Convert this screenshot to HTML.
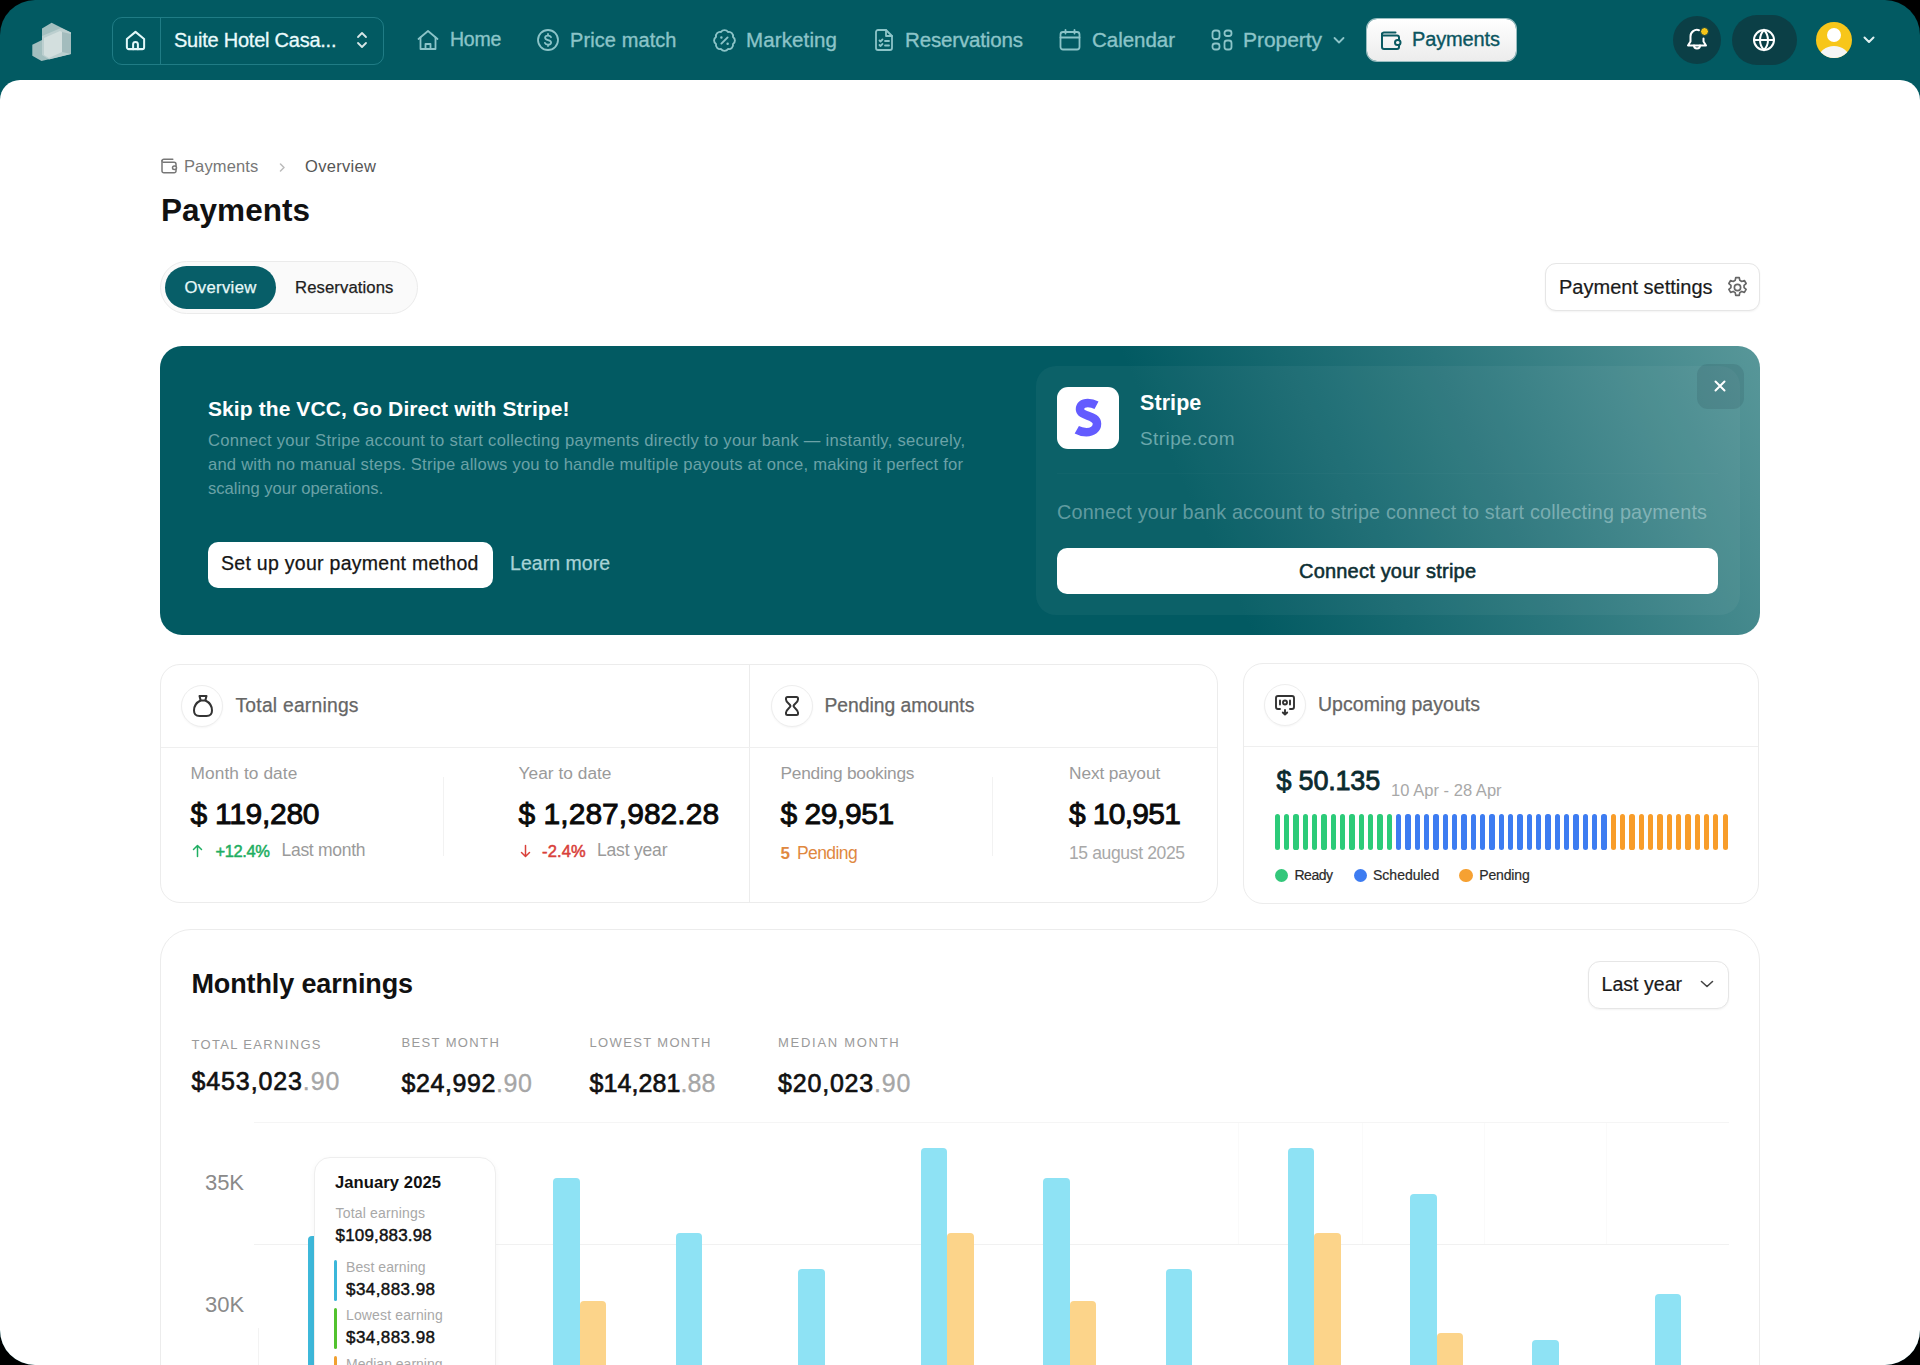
<!DOCTYPE html>
<html><head><meta charset="utf-8">
<style>
*{box-sizing:border-box;margin:0;padding:0}
html,body{width:1920px;height:1365px;overflow:hidden;background:#000}
body{font-family:"Liberation Sans",sans-serif;position:relative}
#frame{position:absolute;left:0;top:0;width:1920px;height:1365px;border-radius:35px;overflow:hidden;background:#025a62}
.abs{position:absolute;white-space:nowrap}
#page{position:absolute;left:0;top:80px;width:1920px;height:1285px;background:#fff;border-radius:20px 20px 0 0;overflow:hidden}
svg{display:block}
</style></head>
<body>
<div id="frame">
<svg class="abs" style="left:0px;top:0px;" width="80" height="80" viewBox="0 0 80 80"><polygon points="42,28.5 51.6,22.7 71,32.4 71,54 41.5,61 32.3,55.7 32.3,44.7 42,40" fill="#a3bfbf"/><polygon points="42,36 61,28 71,32.4 71,54 49,59.5 42,55" fill="#bccfcf"/><polygon points="44,38 60,31 62,32 62,52 49,58 44,55" fill="#d3dfde"/><polygon points="62,32 71,34 71,54 62,52" fill="#a3bcbd"/></svg>
<div class="abs" style="left:112px;top:17px;width:272px;height:48px;border:1.2px solid rgba(90,190,200,0.35);border-radius:10px"></div>
<div class="abs" style="left:160px;top:18px;width:1.2px;height:46px;background:rgba(90,190,200,0.35)"></div>
<svg class="abs" style="left:124px;top:29px;" width="23" height="23" viewBox="0 0 24 24"><g fill="none" stroke="#e2f8f9" stroke-width="2.1" stroke-linecap="round" stroke-linejoin="round"><path d="M3 10.5 12 3l9 7.5V19a2 2 0 0 1-2 2H5a2 2 0 0 1-2-2z"/><path d="M9.5 21v-5a2.5 2.5 0 0 1 5 0v5"/></g></svg>
<div class="abs t" style="left:174.00px;top:30.07px;font-size:20px;line-height:20px;color:#eafbfc;letter-spacing:-0.236px;-webkit-text-stroke:0.3px #eafbfc;">Suite Hotel Casa...</div>
<svg class="abs" style="left:354px;top:30px;" width="16" height="20" viewBox="0 0 16 20"><path d="M4 7l4-4 4 4M4 13l4 4 4-4" fill="none" stroke="#d8e6e7" stroke-width="1.8" stroke-linecap="round" stroke-linejoin="round"/></svg>
<svg class="abs" style="left:416px;top:28px;" width="24" height="24" viewBox="0 0 24 24"><g fill="none" stroke="#8cc4c8" stroke-width="1.8" stroke-linecap="round" stroke-linejoin="round"><path d="M2.5 11 12 3l9.5 8"/><path d="M4.5 9.5V21h15V9.5"/><path d="M9.5 21v-5h5v5"/></g></svg>
<div class="abs t" style="left:450.00px;top:30.49px;font-size:19.5px;line-height:19.5px;color:#8cc4c8;letter-spacing:-0.244px;-webkit-text-stroke:0.35px #8cc4c8;">Home</div>
<svg class="abs" style="left:536px;top:28px;" width="24" height="24" viewBox="0 0 24 24"><g fill="none" stroke="#8cc4c8" stroke-width="1.8" stroke-linecap="round" stroke-linejoin="round"><circle cx="12" cy="12" r="10"/><path d="M15 9.2c-.5-1-1.6-1.6-3-1.6-1.7 0-2.9.9-2.9 2.2 0 3 6 1.7 6 4.6 0 1.3-1.3 2.2-3.1 2.2-1.5 0-2.6-.6-3.1-1.7M12 6v1.6M12 16.6V18"/></g></svg>
<div class="abs t" style="left:570.00px;top:30.07px;font-size:20px;line-height:20px;color:#8cc4c8;letter-spacing:0.091px;-webkit-text-stroke:0.35px #8cc4c8;">Price match</div>
<svg class="abs" style="left:712px;top:28px;" width="25" height="25" viewBox="0 0 24 24"><g fill="none" stroke="#8cc4c8" stroke-width="1.8" stroke-linecap="round" stroke-linejoin="round"><path d="M3.85 8.62a4 4 0 0 1 4.78-4.77 4 4 0 0 1 6.74 0 4 4 0 0 1 4.78 4.78 4 4 0 0 1 0 6.74 4 4 0 0 1-4.77 4.78 4 4 0 0 1-6.75 0 4 4 0 0 1-4.78-4.77 4 4 0 0 1 0-6.76Z"/><path d="m15 9-6 6"/><path d="M9 9h.01M15 15h.01" stroke-width="2.4"/></g></svg>
<div class="abs t" style="left:746.00px;top:29.65px;font-size:20.5px;line-height:20.5px;color:#8cc4c8;letter-spacing:0.123px;-webkit-text-stroke:0.35px #8cc4c8;">Marketing</div>
<svg class="abs" style="left:872px;top:28px;" width="24" height="24" viewBox="0 0 24 24"><g fill="none" stroke="#8cc4c8" stroke-width="1.8" stroke-linecap="round" stroke-linejoin="round"><path d="M14 2H6a2 2 0 0 0-2 2v16a2 2 0 0 0 2 2h12a2 2 0 0 0 2-2V8z"/><path d="M14 2v6h6"/><path d="M7.5 12.5l1 1 2-2M7.5 17l1 1 2-2M13 13h4M13 17.5h4"/></g></svg>
<div class="abs t" style="left:905.00px;top:29.65px;font-size:20.5px;line-height:20.5px;color:#8cc4c8;letter-spacing:-0.149px;-webkit-text-stroke:0.35px #8cc4c8;">Reservations</div>
<svg class="abs" style="left:1058px;top:28px;" width="24" height="24" viewBox="0 0 24 24"><g fill="none" stroke="#8cc4c8" stroke-width="1.8" stroke-linecap="round" stroke-linejoin="round"><rect x="2.5" y="4" width="19" height="17.5" rx="2.5"/><path d="M2.5 9.5h19M7.5 2v3.5M16.5 2v3.5"/></g></svg>
<div class="abs t" style="left:1092.00px;top:29.65px;font-size:20.5px;line-height:20.5px;color:#8cc4c8;letter-spacing:-0.029px;-webkit-text-stroke:0.35px #8cc4c8;">Calendar</div>
<svg class="abs" style="left:1210px;top:28px;" width="24" height="24" viewBox="0 0 24 24"><g fill="none" stroke="#8cc4c8" stroke-width="1.8" stroke-linecap="round" stroke-linejoin="round"><rect x="2.5" y="2.5" width="7" height="8.5" rx="2.5"/><rect x="14.5" y="2.5" width="7" height="5.5" rx="2.5"/><rect x="2.5" y="15.5" width="7" height="6" rx="2.5"/><rect x="14.5" y="12.5" width="7" height="9" rx="2.5"/></g></svg>
<div class="abs t" style="left:1243.00px;top:29.22px;font-size:21px;line-height:21px;color:#8cc4c8;letter-spacing:-0.054px;-webkit-text-stroke:0.35px #8cc4c8;">Property</div>
<svg class="abs" style="left:1332px;top:34px;" width="14" height="12" viewBox="0 0 14 12"><path d="M2.5 4l4.5 4.5L11.5 4" fill="none" stroke="#8cc4c8" stroke-width="1.8" stroke-linecap="round" stroke-linejoin="round"/></svg>
<div class="abs" style="left:1367px;top:19px;width:149px;height:42px;border-radius:10px;background:linear-gradient(#fff,#ececec);box-shadow:0 0 0 1px rgba(255,255,255,.6)"></div>
<svg class="abs" style="left:1379px;top:29px;" width="24" height="22" viewBox="0 0 24 22"><g fill="none" stroke="#0b5a62" stroke-width="2" stroke-linecap="round" stroke-linejoin="round"><path d="M3 4.5V18a2 2 0 0 0 2 2h13a2 2 0 0 0 2-2v-2"/><path d="M3 5.5a2 2 0 0 1 2-2h11.5M4 6.5h14a2 2 0 0 1 2 2V11"/><rect x="16" y="11" width="5.5" height="5" rx="2.5"/></g></svg>
<div class="abs t" style="left:1412.00px;top:29.07px;font-size:20px;line-height:20px;color:#0b5560;letter-spacing:-0.134px;-webkit-text-stroke:0.35px #0b5560;">Payments</div>
<div class="abs" style="left:1673px;top:16px;width:48px;height:48px;border-radius:50%;background:#0b3f46"></div>
<svg class="abs" style="left:1684px;top:26px;" width="26" height="28" viewBox="0 0 26 28"><g fill="none" stroke="#fff" stroke-width="2" stroke-linecap="round" stroke-linejoin="round"><path d="M15 4.2A6.5 6.5 0 0 0 6.5 10.5v5L4 19.5h18l-2.5-4v-3"/><path d="M10 19.5a3 3 0 0 0 6 0"/></g></svg>
<div class="abs" style="left:1700px;top:27px;width:9px;height:9px;border-radius:50%;background:#f5c518;border:1.5px solid #0b3f46"></div>
<div class="abs" style="left:1732px;top:15px;width:65px;height:50px;border-radius:25px;background:#0b3f46"></div>
<svg class="abs" style="left:1752px;top:28px;" width="24" height="24" viewBox="0 0 24 24"><g fill="none" stroke="#fff" stroke-width="2" stroke-linecap="round"><circle cx="12" cy="12" r="10"/><path d="M2 12h20"/><path d="M12 2c2.8 2.9 4 6.4 4 10s-1.2 7.1-4 10c-2.8-2.9-4-6.4-4-10s1.2-7.1 4-10z"/></g></svg>
<div class="abs" style="left:1816px;top:22px;width:36px;height:36px;border-radius:50%;background:#f7c61a;overflow:hidden"><div style="position:absolute;left:11px;top:6px;width:14px;height:14px;border-radius:50%;background:#fff"></div><div style="position:absolute;left:3px;top:24px;width:30px;height:24px;border-radius:50%;background:#f5f5f5"></div></div>
<svg class="abs" style="left:1862px;top:34px;" width="14" height="12" viewBox="0 0 14 12"><path d="M2.5 3.5l4.5 4.5 4.5-4.5" fill="none" stroke="#dff0f0" stroke-width="2" stroke-linecap="round" stroke-linejoin="round"/></svg>
<div id="page"><div style="position:absolute;left:0;top:-80px;width:1920px;height:1365px">
<svg class="abs" style="left:160px;top:157px;" width="18" height="17" viewBox="0 0 18 17"><g fill="none" stroke="#777" stroke-width="1.5" stroke-linecap="round" stroke-linejoin="round"><path d="M2 3.5V14a1.8 1.8 0 0 0 1.8 1.8h10.4a1.8 1.8 0 0 0 1.8-1.8v-1.5"/><path d="M2 4a1.8 1.8 0 0 1 1.8-1.8h9M3 5.2h11a2 2 0 0 1 2 2v1.8"/><rect x="12.5" y="9" width="4" height="3.5" rx="1.75"/></g></svg>
<div class="abs t" style="left:184.00px;top:157.73px;font-size:16.5px;line-height:16.5px;color:#777;letter-spacing:0.118px;">Payments</div>
<svg class="abs" style="left:278px;top:163px;" width="9" height="9" viewBox="0 0 9 9"><path d="M2.5 1l3.5 3.5L2.5 8" fill="none" stroke="#bbb" stroke-width="1.5" stroke-linecap="round" stroke-linejoin="round"/></svg>
<div class="abs t" style="left:305.00px;top:157.73px;font-size:16.5px;line-height:16.5px;color:#555;letter-spacing:0.319px;">Overview</div>
<div class="abs t" style="left:161.00px;top:194.54px;font-size:31.5px;line-height:31.5px;color:#111;font-weight:700;letter-spacing:0.025px;">Payments</div>
<div class="abs" style="left:160px;top:261px;width:258px;height:53px;border:1px solid #ebebeb;border-radius:27px;background:#fafafa"></div>
<div class="abs" style="left:165px;top:266px;width:111px;height:43px;border-radius:22px;background:#075e68"></div>
<div class="abs t" style="left:184.50px;top:280.16px;font-size:16.7px;line-height:16.7px;color:#e6f8f8;letter-spacing:0.322px;-webkit-text-stroke:0.25px #e6f8f8;">Overview</div>
<div class="abs t" style="left:295.00px;top:280.16px;font-size:16.7px;line-height:16.7px;color:#1e1e1e;letter-spacing:0.092px;-webkit-text-stroke:0.25px #1e1e1e;">Reservations</div>
<div class="abs" style="left:1545px;top:263px;width:215px;height:48px;border:1px solid #e6e6e6;border-radius:11px;background:#fff;box-shadow:0 1px 2px rgba(0,0,0,0.05)"></div>
<div class="abs t" style="left:1559.00px;top:277.07px;font-size:20px;line-height:20px;color:#1a1a1a;letter-spacing:0.012px;-webkit-text-stroke:0.2px #1a1a1a;">Payment settings</div>
<svg class="abs" style="left:1725px;top:275px;" width="25" height="25" viewBox="0 0 24 24"><g fill="none" stroke="#666" stroke-width="1.6" stroke-linejoin="round"><path d="M10.3 2.5h3.4l.5 2.6 1.9 1.1 2.5-.9 1.7 2.9-2 1.7v2.2l2 1.7-1.7 2.9-2.5-.9-1.9 1.1-.5 2.6h-3.4l-.5-2.6-1.9-1.1-2.5.9-1.7-2.9 2-1.7v-2.2l-2-1.7 1.7-2.9 2.5.9 1.9-1.1z"/><circle cx="12" cy="12" r="3"/></g></svg>
<div class="abs" style="left:160px;top:346px;width:1600px;height:289px;border-radius:22px;background:linear-gradient(65deg,#025a62 0%,#025a62 63%,#2a767c 81%,#589799 100%)"></div>
<div class="abs t" style="left:208.00px;top:397.62px;font-size:21px;line-height:21px;color:#fff;font-weight:700;letter-spacing:0.094px;">Skip the VCC, Go Direct with Stripe!</div>
<div class="abs t" style="left:208.00px;top:433.20px;font-size:16.6px;line-height:16.6px;color:#6ba2a7;letter-spacing:0.290px;">Connect your Stripe account to start collecting payments directly to your bank — instantly, securely,</div>
<div class="abs t" style="left:208.00px;top:457.20px;font-size:16.6px;line-height:16.6px;color:#6ba2a7;letter-spacing:0.208px;">and with no manual steps. Stripe allows you to handle multiple payouts at once, making it perfect for</div>
<div class="abs t" style="left:208.00px;top:481.20px;font-size:16.6px;line-height:16.6px;color:#6ba2a7;font-weight:0.25;">scaling your operations.</div>
<div class="abs" style="left:208px;top:542px;width:285px;height:46px;border-radius:10px;background:#fff"></div>
<div class="abs t" style="left:221.00px;top:554.49px;font-size:19.5px;line-height:19.5px;color:#151515;letter-spacing:0.280px;-webkit-text-stroke:0.25px #151515;">Set up your payment method</div>
<div class="abs t" style="left:510.00px;top:554.49px;font-size:19.5px;line-height:19.5px;color:#a9d3d6;letter-spacing:0.031px;-webkit-text-stroke:0.25px #a9d3d6;">Learn more</div>
<div class="abs" style="left:1036px;top:366px;width:704px;height:249px;border-radius:20px;background:rgba(255,255,255,0.045)"></div>
<div class="abs" style="left:1057px;top:387px;width:62px;height:62px;border-radius:11px;background:#fff"></div>
<svg class="abs" style="left:1072px;top:397px;" width="32" height="44" viewBox="0 0 32 44"><path d="M24.5 8.2C21.5 6.6 18.6 6 15.8 6 10.6 6 8 8.6 8 12.2c0 7.6 17 5.4 17 14.6 0 5.2-4.4 8.4-10.6 8.4-3.6 0-7-.9-9.6-2.4" fill="none" stroke="#635bff" stroke-width="8.5" stroke-linecap="butt"/></svg>
<div class="abs t" style="left:1140.00px;top:392.80px;font-size:21.5px;line-height:21.5px;color:#fff;font-weight:700;letter-spacing:0.072px;">Stripe</div>
<div class="abs t" style="left:1140.00px;top:428.92px;font-size:19px;line-height:19px;color:#6aa7ab;letter-spacing:0.410px;">Stripe.com</div>
<div class="abs" style="left:1057px;top:473px;width:661px;height:1px;background:rgba(255,255,255,0.025)"></div>
<div class="abs t" style="left:1057.00px;top:502.74px;font-size:19.8px;line-height:19.8px;color:rgba(220,240,242,0.42);letter-spacing:0.188px;">Connect your bank account to stripe connect to start collecting payments</div>
<div class="abs" style="left:1057px;top:548px;width:661px;height:46px;border-radius:10px;background:#fff"></div>
<div class="abs t" style="left:1299.00px;top:560.57px;font-size:20px;line-height:20px;color:#0e2f33;letter-spacing:0.199px;-webkit-text-stroke:0.55px #0e2f33;">Connect your stripe</div>
<div class="abs" style="left:1697px;top:364px;width:47px;height:45px;border-radius:11px;background:rgba(20,50,60,0.13)"></div>
<svg class="abs" style="left:1713px;top:379px;" width="14" height="14" viewBox="0 0 14 14"><path d="M2.5 2.5l9 9M11.5 2.5l-9 9" stroke="#fff" stroke-width="2" stroke-linecap="round"/></svg>
<div class="abs" style="left:160px;top:664px;width:1058px;height:239px;border:1px solid #ececec;border-radius:20px;background:#fff"></div>
<div class="abs" style="left:749px;top:665px;width:1px;height:237px;background:#ececec"></div>
<div class="abs" style="left:161px;top:747px;width:1056px;height:1px;background:#efefef"></div>
<div class="abs" style="left:181px;top:685px;width:42px;height:42px;border-radius:50%;border:1px solid #eeeeee;background:#fff;box-shadow:0 1px 2px rgba(0,0,0,0.04)"></div>
<svg class="abs" style="left:190px;top:693px;" width="26" height="26" viewBox="0 0 26 26"><g fill="none" stroke="#333" stroke-width="2" stroke-linejoin="round" stroke-linecap="round"><path d="M9.5 3h7l-1.2 4.5h-4.6z"/><path d="M10.5 7.5C6.5 9.5 4 13.5 4 17.5 4 21 6 23 9.5 23h7c3.5 0 5.5-2 5.5-5.5 0-4-2.5-8-6.5-10"/></g></svg>
<div class="abs t" style="left:235.50px;top:695.96px;font-size:19.3px;line-height:19.3px;color:#666;letter-spacing:0.227px;-webkit-text-stroke:0.25px #666;">Total earnings</div>
<div class="abs t" style="left:190.50px;top:765.36px;font-size:17.3px;line-height:17.3px;color:#9a9a9a;letter-spacing:0.093px;">Month to date</div>
<div class="abs t" style="left:190.50px;top:799.00px;font-size:30px;line-height:30px;color:#0a0a0a;letter-spacing:-0.281px;-webkit-text-stroke:0.9px #0a0a0a;">$ 119,280</div>
<svg class="abs" style="left:191px;top:844px;" width="13" height="14" viewBox="0 0 13 14"><path d="M6.5 12.5V2M2.5 5.5l4-4 4 4" fill="none" stroke="#1fae62" stroke-width="1.5" stroke-linecap="round" stroke-linejoin="round"/></svg>
<div class="abs t" style="left:215.50px;top:842.63px;font-size:16.5px;line-height:16.5px;color:#1fae62;letter-spacing:-0.424px;-webkit-text-stroke:0.5px #1fae62;">+12.4%</div>
<div class="abs t" style="left:281.50px;top:841.79px;font-size:17.5px;line-height:17.5px;color:#9a9a9a;letter-spacing:-0.286px;">Last month</div>
<div class="abs" style="left:443px;top:777px;width:1px;height:79px;background:#f2f2f2"></div>
<div class="abs t" style="left:518.50px;top:765.36px;font-size:17.3px;line-height:17.3px;color:#9a9a9a;letter-spacing:0.038px;">Year to date</div>
<div class="abs t" style="left:518.50px;top:799.00px;font-size:30px;line-height:30px;color:#0a0a0a;letter-spacing:0.032px;-webkit-text-stroke:0.9px #0a0a0a;">$ 1,287,982.28</div>
<svg class="abs" style="left:519px;top:844px;" width="13" height="14" viewBox="0 0 13 14"><path d="M6.5 1.5V12M2.5 8.5l4 4 4-4" fill="none" stroke="#d9403a" stroke-width="1.5" stroke-linecap="round" stroke-linejoin="round"/></svg>
<div class="abs t" style="left:542.00px;top:842.63px;font-size:16.5px;line-height:16.5px;color:#d9403a;letter-spacing:0.173px;-webkit-text-stroke:0.5px #d9403a;">-2.4%</div>
<div class="abs t" style="left:597.00px;top:841.79px;font-size:17.5px;line-height:17.5px;color:#9a9a9a;letter-spacing:-0.186px;">Last year</div>
<div class="abs" style="left:771px;top:685px;width:42px;height:42px;border-radius:50%;border:1px solid #eeeeee;background:#fff;box-shadow:0 1px 2px rgba(0,0,0,0.04)"></div>
<svg class="abs" style="left:780px;top:694px;" width="24" height="24" viewBox="0 0 24 24"><path d="M7.5 3h9A1.5 1.5 0 0 1 18 4.5v1c0 3-4 4.5-4.5 6.5.5 2 4.5 3.5 4.5 6.5v1a1.5 1.5 0 0 1-1.5 1.5h-9A1.5 1.5 0 0 1 6 19.5v-1c0-3 4-4.5 4.5-6.5C10 10 6 8.5 6 5.5v-1A1.5 1.5 0 0 1 7.5 3z" fill="none" stroke="#333" stroke-width="2" stroke-linejoin="round"/></svg>
<div class="abs t" style="left:824.50px;top:695.96px;font-size:19.3px;line-height:19.3px;color:#666;letter-spacing:-0.020px;-webkit-text-stroke:0.25px #666;">Pending amounts</div>
<div class="abs t" style="left:780.50px;top:765.36px;font-size:17.3px;line-height:17.3px;color:#9a9a9a;letter-spacing:-0.227px;">Pending bookings</div>
<div class="abs t" style="left:780.50px;top:799.00px;font-size:30px;line-height:30px;color:#0a0a0a;letter-spacing:-0.454px;-webkit-text-stroke:0.9px #0a0a0a;">$ 29,951</div>
<div class="abs t" style="left:780.50px;top:845.21px;font-size:17px;line-height:17px;color:#e0883f;font-weight:700;">5</div>
<div class="abs t" style="left:797.00px;top:844.79px;font-size:17.5px;line-height:17.5px;color:#e0883f;letter-spacing:-0.589px;">Pending</div>
<div class="abs" style="left:992px;top:777px;width:1px;height:79px;background:#f2f2f2"></div>
<div class="abs t" style="left:1069.00px;top:765.36px;font-size:17.3px;line-height:17.3px;color:#9a9a9a;letter-spacing:-0.103px;">Next payout</div>
<div class="abs t" style="left:1069.00px;top:799.00px;font-size:30px;line-height:30px;color:#0a0a0a;letter-spacing:-0.683px;-webkit-text-stroke:0.9px #0a0a0a;">$ 10,951</div>
<div class="abs t" style="left:1069.00px;top:844.79px;font-size:17.5px;line-height:17.5px;color:#a8a8a8;letter-spacing:-0.359px;">15 august 2025</div>
<div class="abs" style="left:1243px;top:663px;width:516px;height:241px;border:1px solid #ececec;border-radius:20px;background:#fff"></div>
<div class="abs" style="left:1244px;top:746px;width:514px;height:1px;background:#efefef"></div>
<div class="abs" style="left:1264px;top:684px;width:42px;height:42px;border-radius:50%;border:1px solid #eeeeee;background:#fff;box-shadow:0 1px 2px rgba(0,0,0,0.04)"></div>
<svg class="abs" style="left:1273px;top:693px;" width="24" height="24" viewBox="0 0 24 24"><g fill="none" stroke="#333" stroke-width="1.9" stroke-linecap="round" stroke-linejoin="round"><path d="M7 16H5a2 2 0 0 1-2-2V5a2 2 0 0 1 2-2h14a2 2 0 0 1 2 2v9a2 2 0 0 1-2 2h-2"/><path d="M12 17v4.5M9.8 19.5 12 21.7l2.2-2.2"/><path d="M7 7.5v4M17 7.5v4"/><circle cx="12" cy="9.5" r="2"/></g></svg>
<div class="abs t" style="left:1318.00px;top:695.09px;font-size:19.5px;line-height:19.5px;color:#666;letter-spacing:0.032px;-webkit-text-stroke:0.25px #666;">Upcoming payouts</div>
<div class="abs t" style="left:1276.50px;top:767.54px;font-size:27px;line-height:27px;color:#0b2b2f;letter-spacing:-0.201px;-webkit-text-stroke:0.8px #0b2b2f;">$ 50.135</div>
<div class="abs t" style="left:1391.00px;top:782.03px;font-size:16.5px;line-height:16.5px;color:#a8a8a8;letter-spacing:0.037px;">10 Apr - 28 Apr</div>
<div class="abs" style="left:1274.80px;top:813.5px;width:5.2px;height:36.7px;border-radius:2.6px;background:#2ccb79"></div>
<div class="abs" style="left:1284.13px;top:813.5px;width:5.2px;height:36.7px;border-radius:2.6px;background:#2ccb79"></div>
<div class="abs" style="left:1293.46px;top:813.5px;width:5.2px;height:36.7px;border-radius:2.6px;background:#2ccb79"></div>
<div class="abs" style="left:1302.79px;top:813.5px;width:5.2px;height:36.7px;border-radius:2.6px;background:#2ccb79"></div>
<div class="abs" style="left:1312.12px;top:813.5px;width:5.2px;height:36.7px;border-radius:2.6px;background:#2ccb79"></div>
<div class="abs" style="left:1321.45px;top:813.5px;width:5.2px;height:36.7px;border-radius:2.6px;background:#2ccb79"></div>
<div class="abs" style="left:1330.78px;top:813.5px;width:5.2px;height:36.7px;border-radius:2.6px;background:#2ccb79"></div>
<div class="abs" style="left:1340.11px;top:813.5px;width:5.2px;height:36.7px;border-radius:2.6px;background:#2ccb79"></div>
<div class="abs" style="left:1349.44px;top:813.5px;width:5.2px;height:36.7px;border-radius:2.6px;background:#2ccb79"></div>
<div class="abs" style="left:1358.77px;top:813.5px;width:5.2px;height:36.7px;border-radius:2.6px;background:#2ccb79"></div>
<div class="abs" style="left:1368.10px;top:813.5px;width:5.2px;height:36.7px;border-radius:2.6px;background:#2ccb79"></div>
<div class="abs" style="left:1377.43px;top:813.5px;width:5.2px;height:36.7px;border-radius:2.6px;background:#2ccb79"></div>
<div class="abs" style="left:1386.76px;top:813.5px;width:5.2px;height:36.7px;border-radius:2.6px;background:#2ccb79"></div>
<div class="abs" style="left:1396.09px;top:813.5px;width:5.2px;height:36.7px;border-radius:2.6px;background:#3d7cf1"></div>
<div class="abs" style="left:1405.42px;top:813.5px;width:5.2px;height:36.7px;border-radius:2.6px;background:#3d7cf1"></div>
<div class="abs" style="left:1414.75px;top:813.5px;width:5.2px;height:36.7px;border-radius:2.6px;background:#3d7cf1"></div>
<div class="abs" style="left:1424.08px;top:813.5px;width:5.2px;height:36.7px;border-radius:2.6px;background:#3d7cf1"></div>
<div class="abs" style="left:1433.41px;top:813.5px;width:5.2px;height:36.7px;border-radius:2.6px;background:#3d7cf1"></div>
<div class="abs" style="left:1442.74px;top:813.5px;width:5.2px;height:36.7px;border-radius:2.6px;background:#3d7cf1"></div>
<div class="abs" style="left:1452.07px;top:813.5px;width:5.2px;height:36.7px;border-radius:2.6px;background:#3d7cf1"></div>
<div class="abs" style="left:1461.40px;top:813.5px;width:5.2px;height:36.7px;border-radius:2.6px;background:#3d7cf1"></div>
<div class="abs" style="left:1470.73px;top:813.5px;width:5.2px;height:36.7px;border-radius:2.6px;background:#3d7cf1"></div>
<div class="abs" style="left:1480.06px;top:813.5px;width:5.2px;height:36.7px;border-radius:2.6px;background:#3d7cf1"></div>
<div class="abs" style="left:1489.39px;top:813.5px;width:5.2px;height:36.7px;border-radius:2.6px;background:#3d7cf1"></div>
<div class="abs" style="left:1498.72px;top:813.5px;width:5.2px;height:36.7px;border-radius:2.6px;background:#3d7cf1"></div>
<div class="abs" style="left:1508.05px;top:813.5px;width:5.2px;height:36.7px;border-radius:2.6px;background:#3d7cf1"></div>
<div class="abs" style="left:1517.38px;top:813.5px;width:5.2px;height:36.7px;border-radius:2.6px;background:#3d7cf1"></div>
<div class="abs" style="left:1526.71px;top:813.5px;width:5.2px;height:36.7px;border-radius:2.6px;background:#3d7cf1"></div>
<div class="abs" style="left:1536.04px;top:813.5px;width:5.2px;height:36.7px;border-radius:2.6px;background:#3d7cf1"></div>
<div class="abs" style="left:1545.37px;top:813.5px;width:5.2px;height:36.7px;border-radius:2.6px;background:#3d7cf1"></div>
<div class="abs" style="left:1554.70px;top:813.5px;width:5.2px;height:36.7px;border-radius:2.6px;background:#3d7cf1"></div>
<div class="abs" style="left:1564.03px;top:813.5px;width:5.2px;height:36.7px;border-radius:2.6px;background:#3d7cf1"></div>
<div class="abs" style="left:1573.36px;top:813.5px;width:5.2px;height:36.7px;border-radius:2.6px;background:#3d7cf1"></div>
<div class="abs" style="left:1582.69px;top:813.5px;width:5.2px;height:36.7px;border-radius:2.6px;background:#3d7cf1"></div>
<div class="abs" style="left:1592.02px;top:813.5px;width:5.2px;height:36.7px;border-radius:2.6px;background:#3d7cf1"></div>
<div class="abs" style="left:1601.35px;top:813.5px;width:5.2px;height:36.7px;border-radius:2.6px;background:#3d7cf1"></div>
<div class="abs" style="left:1610.68px;top:813.5px;width:5.2px;height:36.7px;border-radius:2.6px;background:#f89d2a"></div>
<div class="abs" style="left:1620.01px;top:813.5px;width:5.2px;height:36.7px;border-radius:2.6px;background:#f89d2a"></div>
<div class="abs" style="left:1629.34px;top:813.5px;width:5.2px;height:36.7px;border-radius:2.6px;background:#f89d2a"></div>
<div class="abs" style="left:1638.67px;top:813.5px;width:5.2px;height:36.7px;border-radius:2.6px;background:#f89d2a"></div>
<div class="abs" style="left:1648.00px;top:813.5px;width:5.2px;height:36.7px;border-radius:2.6px;background:#f89d2a"></div>
<div class="abs" style="left:1657.33px;top:813.5px;width:5.2px;height:36.7px;border-radius:2.6px;background:#f89d2a"></div>
<div class="abs" style="left:1666.66px;top:813.5px;width:5.2px;height:36.7px;border-radius:2.6px;background:#f89d2a"></div>
<div class="abs" style="left:1675.99px;top:813.5px;width:5.2px;height:36.7px;border-radius:2.6px;background:#f89d2a"></div>
<div class="abs" style="left:1685.32px;top:813.5px;width:5.2px;height:36.7px;border-radius:2.6px;background:#f89d2a"></div>
<div class="abs" style="left:1694.65px;top:813.5px;width:5.2px;height:36.7px;border-radius:2.6px;background:#f89d2a"></div>
<div class="abs" style="left:1703.98px;top:813.5px;width:5.2px;height:36.7px;border-radius:2.6px;background:#f89d2a"></div>
<div class="abs" style="left:1713.31px;top:813.5px;width:5.2px;height:36.7px;border-radius:2.6px;background:#f89d2a"></div>
<div class="abs" style="left:1722.64px;top:813.5px;width:5.2px;height:36.7px;border-radius:2.6px;background:#f89d2a"></div>
<div class="abs" style="left:1274.5px;top:868.5px;width:13.5px;height:13.5px;border-radius:50%;background:#33c77a"></div>
<div class="abs t" style="left:1294.50px;top:868.15px;font-size:14px;line-height:14px;color:#2a2a2a;letter-spacing:-0.492px;-webkit-text-stroke:0.2px #2a2a2a;">Ready</div>
<div class="abs" style="left:1353.8px;top:868.5px;width:13.5px;height:13.5px;border-radius:50%;background:#3d7cf1"></div>
<div class="abs t" style="left:1373.00px;top:868.15px;font-size:14px;line-height:14px;color:#2a2a2a;letter-spacing:0.004px;-webkit-text-stroke:0.2px #2a2a2a;">Scheduled</div>
<div class="abs" style="left:1459px;top:868.5px;width:13.5px;height:13.5px;border-radius:50%;background:#f6a132"></div>
<div class="abs t" style="left:1479.30px;top:868.15px;font-size:14px;line-height:14px;color:#2a2a2a;letter-spacing:-0.165px;-webkit-text-stroke:0.2px #2a2a2a;">Pending</div>
<div class="abs" style="left:160px;top:929px;width:1600px;height:500px;border:1px solid #ececec;border-radius:31px;background:#fff"></div>
<div class="abs t" style="left:191.50px;top:971.14px;font-size:27px;line-height:27px;color:#111;font-weight:700;letter-spacing:-0.128px;">Monthly earnings</div>
<div class="abs" style="left:1588px;top:961px;width:141px;height:48px;border:1px solid #e6e6e6;border-radius:12px;background:#fff;box-shadow:0 1px 2px rgba(0,0,0,0.05)"></div>
<div class="abs t" style="left:1601.50px;top:974.99px;font-size:19.5px;line-height:19.5px;color:#1a1a1a;letter-spacing:0.048px;-webkit-text-stroke:0.2px #1a1a1a;">Last year</div>
<svg class="abs" style="left:1699px;top:978px;" width="16" height="12" viewBox="0 0 16 12"><path d="M2.5 3.5l5.5 5 5.5-5" fill="none" stroke="#444" stroke-width="1.6" stroke-linecap="round" stroke-linejoin="round"/></svg>
<div class="abs t" style="left:191.50px;top:1038.00px;font-size:13px;line-height:13px;color:#9a9a9a;letter-spacing:1.328px;">TOTAL EARNINGS</div>
<div class="abs t" style="left:401.50px;top:1035.70px;font-size:13px;line-height:13px;color:#9a9a9a;letter-spacing:1.367px;">BEST MONTH</div>
<div class="abs t" style="left:589.50px;top:1035.70px;font-size:13px;line-height:13px;color:#9a9a9a;letter-spacing:1.351px;">LOWEST MONTH</div>
<div class="abs t" style="left:778.00px;top:1035.70px;font-size:13px;line-height:13px;color:#9a9a9a;letter-spacing:1.719px;">MEDIAN MONTH</div>
<div class="abs t" style="left:191.50px;top:1068.84px;font-size:25px;line-height:25px;color:#111;letter-spacing:0.885px;-webkit-text-stroke:0.65px #111;">$453,023<span style="color:#a6a6a6;-webkit-text-stroke:0.3px #a6a6a6">.90</span></div>
<div class="abs t" style="left:401.50px;top:1070.84px;font-size:25px;line-height:25px;color:#111;letter-spacing:0.573px;-webkit-text-stroke:0.65px #111;">$24,992<span style="color:#a6a6a6;-webkit-text-stroke:0.3px #a6a6a6">.90</span></div>
<div class="abs t" style="left:589.50px;top:1070.84px;font-size:25px;line-height:25px;color:#111;letter-spacing:0.073px;-webkit-text-stroke:0.65px #111;">$14,281<span style="color:#a6a6a6;-webkit-text-stroke:0.3px #a6a6a6">.88</span></div>
<div class="abs t" style="left:778.00px;top:1070.84px;font-size:25px;line-height:25px;color:#111;letter-spacing:0.807px;-webkit-text-stroke:0.65px #111;">$20,023<span style="color:#a6a6a6;-webkit-text-stroke:0.3px #a6a6a6">.90</span></div>
<div class="abs" style="left:254px;top:1122px;width:1475px;height:1px;background:#f5f5f5"></div>
<div class="abs" style="left:254px;top:1244px;width:1475px;height:1px;background:#f1f1f1"></div>
<div class="abs" style="left:1238px;top:1123px;width:1px;height:121px;background:#fafafa"></div>
<div class="abs" style="left:1362px;top:1123px;width:1px;height:121px;background:#fafafa"></div>
<div class="abs" style="left:1484px;top:1123px;width:1px;height:121px;background:#fafafa"></div>
<div class="abs" style="left:1606px;top:1123px;width:1px;height:121px;background:#fafafa"></div>
<div class="abs" style="left:258px;top:1328px;width:1px;height:40px;background:#f3f3f3"></div>
<div class="abs t" style="left:205.00px;top:1171.98px;font-size:22px;line-height:22px;color:#8a8a8a;letter-spacing:-0.078px;">35K</div>
<div class="abs t" style="left:205.00px;top:1293.88px;font-size:22px;line-height:22px;color:#8a8a8a;">30K</div>
<div class="abs" style="left:553.0px;top:1178.0px;width:26.5px;height:222.0px;border-radius:4px 4px 0 0;background:#8ee2f4"></div>
<div class="abs" style="left:579.5px;top:1301.0px;width:26.5px;height:99.0px;border-radius:4px 4px 0 0;background:#fcd48a"></div>
<div class="abs" style="left:675.6px;top:1233.0px;width:26.5px;height:167.0px;border-radius:4px 4px 0 0;background:#8ee2f4"></div>
<div class="abs" style="left:798.0px;top:1269.0px;width:26.5px;height:131.0px;border-radius:4px 4px 0 0;background:#8ee2f4"></div>
<div class="abs" style="left:920.6px;top:1147.5px;width:26.5px;height:252.5px;border-radius:4px 4px 0 0;background:#8ee2f4"></div>
<div class="abs" style="left:947.1px;top:1233.0px;width:26.5px;height:167.0px;border-radius:4px 4px 0 0;background:#fcd48a"></div>
<div class="abs" style="left:1043.0px;top:1178.0px;width:26.5px;height:222.0px;border-radius:4px 4px 0 0;background:#8ee2f4"></div>
<div class="abs" style="left:1069.5px;top:1301.0px;width:26.5px;height:99.0px;border-radius:4px 4px 0 0;background:#fcd48a"></div>
<div class="abs" style="left:1165.6px;top:1269.0px;width:26.5px;height:131.0px;border-radius:4px 4px 0 0;background:#8ee2f4"></div>
<div class="abs" style="left:1287.5px;top:1147.5px;width:26.5px;height:252.5px;border-radius:4px 4px 0 0;background:#8ee2f4"></div>
<div class="abs" style="left:1314.0px;top:1233.0px;width:26.5px;height:167.0px;border-radius:4px 4px 0 0;background:#fcd48a"></div>
<div class="abs" style="left:1410.0px;top:1194.0px;width:26.5px;height:206.0px;border-radius:4px 4px 0 0;background:#8ee2f4"></div>
<div class="abs" style="left:1436.5px;top:1333.0px;width:26.5px;height:67.0px;border-radius:4px 4px 0 0;background:#fcd48a"></div>
<div class="abs" style="left:1532.0px;top:1340.0px;width:26.5px;height:60.0px;border-radius:4px 4px 0 0;background:#8ee2f4"></div>
<div class="abs" style="left:1654.7px;top:1294.0px;width:26.5px;height:106.0px;border-radius:4px 4px 0 0;background:#8ee2f4"></div>
<div class="abs" style="left:308px;top:1236px;width:26px;height:200px;border-radius:4px 4px 0 0;background:#3db8da"></div>
<div class="abs" style="left:314px;top:1157px;width:182px;height:260px;border:1px solid #eeeeee;border-radius:16px;background:#fff;box-shadow:0 2px 6px rgba(0,0,0,0.04)"></div>
<div class="abs t" style="left:335.00px;top:1174.95px;font-size:16.6px;line-height:16.6px;color:#111;font-weight:700;letter-spacing:0.075px;">January 2025</div>
<div class="abs t" style="left:335.50px;top:1206.15px;font-size:14px;line-height:14px;color:#a8a8a8;letter-spacing:0.171px;">Total earnings</div>
<div class="abs t" style="left:335.50px;top:1227.11px;font-size:17px;line-height:17px;color:#111;letter-spacing:0.175px;-webkit-text-stroke:0.45px #111;">$109,883.98</div>
<div class="abs" style="left:334px;top:1260px;width:3px;height:41px;border-radius:2px;background:#3bb7da"></div>
<div class="abs t" style="left:346.00px;top:1260.05px;font-size:14px;line-height:14px;color:#a8a8a8;letter-spacing:0.090px;">Best earning</div>
<div class="abs t" style="left:346.00px;top:1281.11px;font-size:17px;line-height:17px;color:#111;letter-spacing:0.434px;-webkit-text-stroke:0.45px #111;">$34,883.98</div>
<div class="abs" style="left:334px;top:1308px;width:3px;height:41px;border-radius:2px;background:#52c22e"></div>
<div class="abs t" style="left:346.00px;top:1308.15px;font-size:14px;line-height:14px;color:#a8a8a8;letter-spacing:0.142px;">Lowest earning</div>
<div class="abs t" style="left:346.00px;top:1328.91px;font-size:17px;line-height:17px;color:#111;letter-spacing:0.434px;-webkit-text-stroke:0.45px #111;">$34,883.98</div>
<div class="abs" style="left:334px;top:1356px;width:3px;height:41px;border-radius:2px;background:#f0a030"></div>
<div class="abs t" style="left:346.00px;top:1357.15px;font-size:14px;line-height:14px;color:#a8a8a8;">Median earning</div>
</div></div>
</div>
</body></html>
